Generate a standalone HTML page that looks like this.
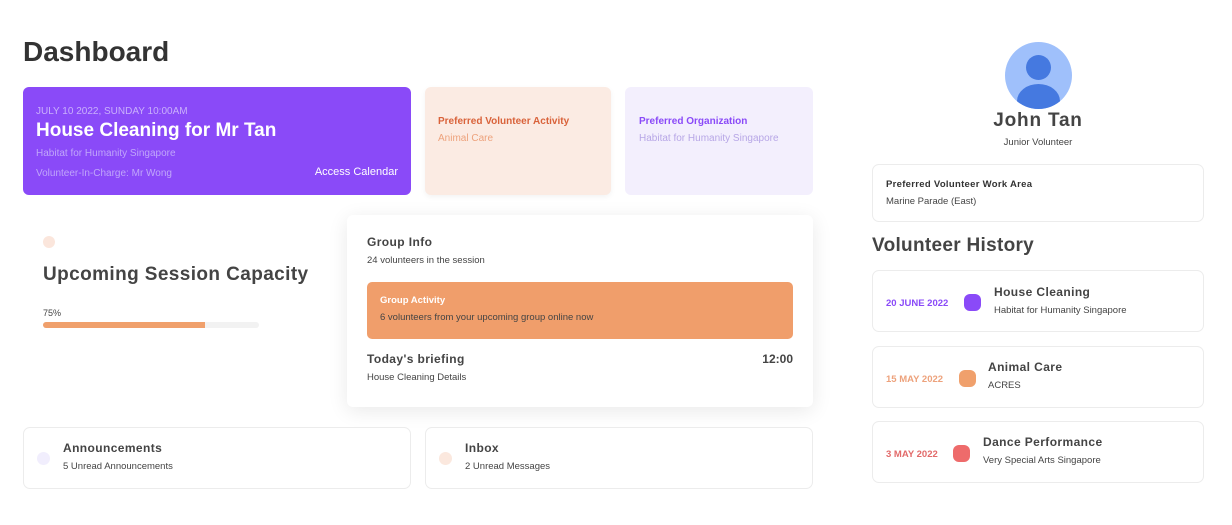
<!DOCTYPE html>
<html><head><style>
*{margin:0;padding:0;box-sizing:border-box}
body{width:1232px;height:525px;background:#fff;font-family:"Liberation Sans",sans-serif;color:#333;position:relative;overflow:hidden}
.a{position:absolute}
.card{position:absolute;border:1px solid #ececec;border-radius:7px;background:#fff}
.dot{position:absolute;border-radius:50%}
.sq{position:absolute;width:17px;height:17px;border-radius:6px}
.s{font-size:9.5px}
</style></head><body>
<div class="a" style="left:23px;top:36px;font-size:28px;font-weight:bold;color:#333">Dashboard</div>

<div class="a" style="left:23px;top:87px;width:388px;height:108px;background:#8a4af8;border-radius:6px;color:#fff">
 <div class="a" style="left:13px;top:19px;font-size:10px;color:#c9b0fb">JULY 10 2022, SUNDAY 10:00AM</div>
 <div class="a" style="left:13px;top:33px;font-size:19px;font-weight:bold">House Cleaning for Mr Tan</div>
 <div class="a" style="left:13px;top:61px;font-size:10px;color:#c0a6fa">Habitat for Humanity Singapore</div>
 <div class="a" style="left:13px;top:81px;font-size:10px;color:#c0a6fa">Volunteer-In-Charge: Mr Wong</div>
 <div class="a" style="right:13px;top:79px;font-size:11px">Access Calendar</div>
</div>
<div class="a" style="left:425px;top:87px;width:186px;height:108px;background:#fbebe3;border-radius:6px;box-shadow:0 2px 6px rgba(0,0,0,.05)">
 <div class="a" style="left:13px;top:29px;font-size:10px;font-weight:bold;color:#d9623a">Preferred Volunteer Activity</div>
 <div class="a" style="left:13px;top:46px;font-size:10px;color:#eda27c">Animal Care</div>
</div>
<div class="a" style="left:625px;top:87px;width:188px;height:108px;background:#f3effd;border-radius:6px">
 <div class="a" style="left:14px;top:29px;font-size:10px;font-weight:bold;color:#8a4af8">Preferred Organization</div>
 <div class="a" style="left:14px;top:46px;font-size:10px;color:#b7a6e6">Habitat for Humanity Singapore</div>
</div>

<div class="dot" style="left:43px;top:236px;width:12px;height:12px;background:#fbe6dc"></div>
<div class="a" style="left:43px;top:264px;font-size:19px;font-weight:bold;color:#444;letter-spacing:.4px">Upcoming Session Capacity</div>
<div class="a" style="left:43px;top:308px;font-size:9px;color:#444">75%</div>
<div class="a" style="left:43px;top:322px;width:216px;height:6px;background:#f2f2f2;border-radius:3px"><div style="width:162px;height:6px;background:#f0a06c;border-radius:3px 0 0 3px"></div></div>

<div class="a" style="left:347px;top:215px;width:466px;height:192px;background:#fff;border-radius:6px;box-shadow:0 4px 20px rgba(0,0,0,.09)">
 <div class="a" style="left:20px;top:20px;font-size:12px;font-weight:bold;color:#444;letter-spacing:.4px">Group Info</div>
 <div class="a s" style="left:20px;top:40px;color:#444">24 volunteers in the session</div>
 <div class="a" style="left:20px;top:67px;width:426px;height:57px;background:#f09e6b;border-radius:5px">
  <div class="a s" style="left:13px;top:13px;font-weight:bold;color:#fff">Group Activity</div>
  <div class="a s" style="left:13px;top:30px;color:#444">6 volunteers from your upcoming group online now</div>
 </div>
 <div class="a" style="left:20px;top:137px;font-size:12px;font-weight:bold;color:#444;letter-spacing:.4px">Today's briefing</div>
 <div class="a" style="right:20px;top:137px;font-size:12px;font-weight:bold;color:#444">12:00</div>
 <div class="a s" style="left:20px;top:157px;color:#444">House Cleaning Details</div>
</div>

<div class="card" style="left:23px;top:427px;width:388px;height:62px">
 <div class="dot" style="left:13px;top:24px;width:13px;height:13px;background:#f1eefd"></div>
 <div class="a" style="left:39px;top:13px;font-size:12px;font-weight:bold;color:#444;letter-spacing:.4px">Announcements</div>
 <div class="a s" style="left:39px;top:33px;color:#444">5 Unread Announcements</div>
</div>
<div class="card" style="left:425px;top:427px;width:388px;height:62px">
 <div class="dot" style="left:13px;top:24px;width:13px;height:13px;background:#fbe8de"></div>
 <div class="a" style="left:39px;top:13px;font-size:12px;font-weight:bold;color:#444;letter-spacing:.4px">Inbox</div>
 <div class="a s" style="left:39px;top:33px;color:#444">2 Unread Messages</div>
</div>

<div class="dot" style="left:1005px;top:42px;width:67px;height:67px;background:#9fc0fb;overflow:hidden">
 <div class="dot" style="left:21px;top:13px;width:25px;height:25px;background:#4579e0"></div>
 <div class="dot" style="left:12px;top:42px;width:43px;height:34px;background:#4579e0;border-radius:50% 50% 0 0"></div>
</div>
<div class="a" style="left:960px;top:110px;width:156px;text-align:center;font-size:19px;font-weight:bold;color:#444;letter-spacing:.8px">John Tan</div>
<div class="a s" style="left:960px;top:137px;width:156px;text-align:center;color:#444">Junior Volunteer</div>

<div class="card" style="left:872px;top:164px;width:332px;height:58px">
 <div class="a s" style="left:13px;top:14px;font-weight:bold;color:#333;letter-spacing:.3px">Preferred Volunteer Work Area</div>
 <div class="a s" style="left:13px;top:31px;color:#444">Marine Parade (East)</div>
</div>
<div class="a" style="left:872px;top:235px;font-size:19px;font-weight:bold;color:#444;letter-spacing:.3px">Volunteer History</div>

<div class="card" style="left:872px;top:270px;width:332px;height:62px">
 <div class="a s" style="left:13px;top:27px;font-weight:bold;color:#8a4af8">20 JUNE 2022</div>
 <div class="sq" style="left:91px;top:23px;background:#8a4af8"></div>
 <div class="a" style="left:121px;top:14px;font-size:12px;font-weight:bold;color:#444;letter-spacing:.4px">House Cleaning</div>
 <div class="a s" style="left:121px;top:34px;color:#444">Habitat for Humanity Singapore</div>
</div>
<div class="card" style="left:872px;top:346px;width:332px;height:62px">
 <div class="a s" style="left:13px;top:27px;font-weight:bold;color:#eda27c">15 MAY 2022</div>
 <div class="sq" style="left:86px;top:23px;background:#f0a06c"></div>
 <div class="a" style="left:115px;top:13px;font-size:12px;font-weight:bold;color:#444;letter-spacing:.4px">Animal Care</div>
 <div class="a s" style="left:115px;top:33px;color:#444">ACRES</div>
</div>
<div class="card" style="left:872px;top:421px;width:332px;height:62px">
 <div class="a s" style="left:13px;top:27px;font-weight:bold;color:#e26a6a">3 MAY 2022</div>
 <div class="sq" style="left:80px;top:23px;background:#ee6b6b"></div>
 <div class="a" style="left:110px;top:13px;font-size:12px;font-weight:bold;color:#444;letter-spacing:.4px">Dance Performance</div>
 <div class="a s" style="left:110px;top:33px;color:#444">Very Special Arts Singapore</div>
</div>
</body></html>
